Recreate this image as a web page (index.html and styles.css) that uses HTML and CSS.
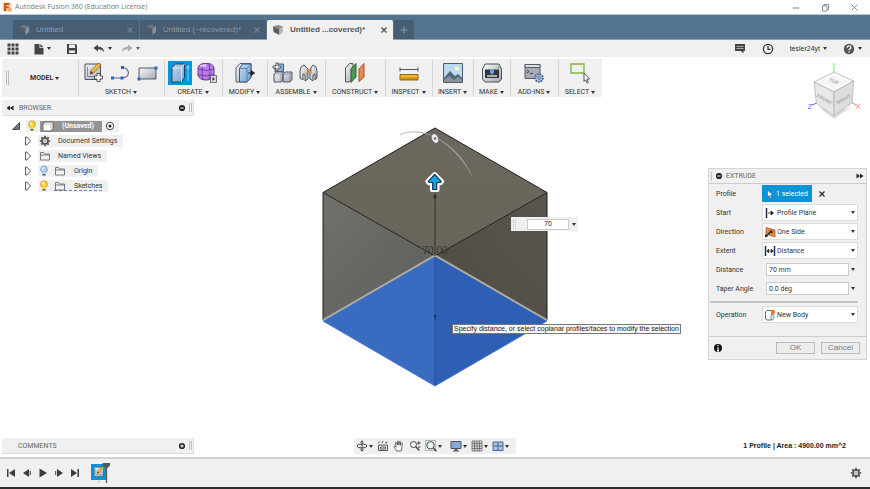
FILE: index.html
```html
<!DOCTYPE html>
<html lang="en">
<head>
<meta charset="utf-8">
<meta name="viewport" content="width=device-width, initial-scale=1">
<title>Autodesk Fusion 360 (Education License)</title>
<link rel="stylesheet" href="styles.css">
</head>
<body>
<svg class="defs" aria-hidden="true">
  <defs>
    <linearGradient id="steel" x1="0" y1="0" x2="1" y2="1"><stop offset="0" stop-color="#f7f8fa"/><stop offset="1" stop-color="#a3a9b6"/></linearGradient>
    <linearGradient id="blue" x1="0" y1="0" x2="1" y2="1"><stop offset="0" stop-color="#c5dcf3"/><stop offset="1" stop-color="#6f9fd0"/></linearGradient>
    <linearGradient id="faceTop" x1="0" y1="0" x2="0" y2="1"><stop offset="0" stop-color="#6c685e"/><stop offset="1" stop-color="#69655b"/></linearGradient>
    <linearGradient id="faceLeft" x1="0" y1="0" x2="1" y2="1"><stop offset="0" stop-color="#70716d"/><stop offset="1" stop-color="#5d5e59"/></linearGradient>
    <linearGradient id="faceRight" x1="1" y1="0" x2="0" y2="1"><stop offset="0" stop-color="#5a554d"/><stop offset="1" stop-color="#4f4b44"/></linearGradient>
    <linearGradient id="arcFade" x1="0" y1="0" x2="1" y2="1"><stop offset="0" stop-color="#aaa" stop-opacity=".5"/><stop offset=".35" stop-color="#8f8f8f"/><stop offset=".7" stop-color="#aaa"/><stop offset="1" stop-color="#aaa" stop-opacity=".1"/></linearGradient>
    <symbol id="tabcube" viewBox="0 0 12 12"><path d="M1 2.500 6 1l5 1.500L7.500 5z" fill="#8b8b8b"/><path d="M1 2.500 7.500 5v6L1.500 8z" fill="#5c5c5c"/><path d="M7.500 5 11 2.500V8l-3.500 3z" fill="#b8b8b8"/></symbol>
    <symbol id="bulb" viewBox="0 0 10 12"><circle cx="5" cy="4.300" r="3.400" stroke-width=".7"/><path d="M3.300 7h3.400v2H3.300z" stroke="none"/><path d="M3.400 9h3.200v1.600H3.400z" fill="#666" stroke="none"/><circle cx="4" cy="3.300" r="1.100" fill="#fff" fill-opacity=".8" stroke="none"/></symbol>
    <symbol id="folder" viewBox="0 0 12 10"><path d="M1.500 9V1.500h3l1 1.500h5v6zM1.500 4h9" fill="#f4f4f4" stroke="#555a66" stroke-width=".8"/></symbol>
    <symbol id="gear" viewBox="0 0 12 12"><path d="M6 .8v10.400M.8 6h10.400M2.300 2.300l7.400 7.400m0-7.400L2.300 9.700" stroke="#505050" stroke-width="1.700"/><circle cx="6" cy="6" r="3" fill="#f0f0f0" stroke="#505050" stroke-width="1.500"/><circle cx="6" cy="6" r="1.200" fill="#f0f0f0" stroke="#777" stroke-width=".6"/></symbol>
    <symbol id="expand" viewBox="0 0 8 10"><path d="M1.500 1v8h1.300L6.500 5 2.800 1z" fill="#f7f7f7" stroke="#333" stroke-width=".8"/></symbol>
    <symbol id="sketch" viewBox="0 0 20 20"><path d="M2 2h15.500v15.500H2z" fill="url(#steel)" stroke="#4c5160"/><path d="M4.500 4.500v10h10" fill="none" stroke="#6d7484" stroke-width=".8"/><path d="m7 12 1-3.500L15.500 1l2.500 2.300-7.700 7.900z" fill="#f4bd37" stroke="#7a5a1d" stroke-width=".7"/><path d="m7 12 1-3 2.100 2.100z" fill="#333"/></symbol>
    <symbol id="cross" viewBox="0 0 8 8"><path d="m1.500 1.500 5 5m0-5-5 5" stroke="currentColor" stroke-width="1.400"/></symbol>
    <symbol id="plusdot" viewBox="0 0 8 8"><circle cx="4" cy="4" r="3.100" fill="#222"/><path d="M2.300 4h3.400M4 2.300v3.400" stroke="#fff"/></symbol>
    <symbol id="minusdot" viewBox="0 0 8 8"><circle cx="4" cy="4" r="3.100" fill="#222"/><path d="M2.300 4h3.400" stroke="#fff"/></symbol>
  </defs>
</svg>

<header class="titlebar">
  <svg class="logo" width="10" height="10" viewBox="0 0 10 10"><path d="M.5.500h9v9h-9z" fill="#f7d3b2"/><path d="M2 1h5.500v2H4.300v1.500H7v1.800H4.300V9H2z" fill="#c85a11"/><path d="M7 6h2.500v3.500H6z" fill="#f0a35f"/></svg>
  <h1>Autodesk Fusion 360 (Education License)</h1>
  <div class="caption">
    <button aria-label="Minimize"><svg width="9" height="9" viewBox="0 0 9 9"><path d="M1 5h6.500" stroke="#777"/></svg></button>
    <button aria-label="Restore"><svg width="9" height="9" viewBox="0 0 9 9"><path d="M1.500 3h4.500v5H1.500zM3 3V1.500h4.500v5H6" fill="none" stroke="#777" stroke-width=".8"/></svg></button>
    <button aria-label="Close"><svg width="9" height="9" viewBox="0 0 9 9"><path d="m1.500 1.500 6 6m0-6-6 6" stroke="#777" stroke-width=".8"/></svg></button>
  </div>
</header>

<nav class="tabs" aria-label="Documents">
  <div class="tab"><svg width="12" height="12"><use href="#tabcube"/></svg><a href="#d1">Untitled</a><button aria-label="Close tab"><svg width="8" height="8"><use href="#cross"/></svg></button></div>
  <div class="tab"><svg width="12" height="12"><use href="#tabcube"/></svg><a href="#d2">Untitled (~recovered)*</a><button aria-label="Close tab"><svg width="8" height="8"><use href="#cross"/></svg></button></div>
  <div class="tab active"><svg width="12" height="12"><use href="#tabcube"/></svg><a href="#d3">Untitled ...covered)*</a><button aria-label="Close tab"><svg width="8" height="8"><use href="#cross"/></svg></button></div>
  <button class="newtab" aria-label="New tab"><svg width="8" height="8" viewBox="0 0 8 8"><path d="M4 .5v7M.5 4h7" stroke="#8396a8" stroke-width="1.200"/></svg></button>
</nav>

<div class="quick">
  <div class="quick-left">
    <button aria-label="Data panel"><svg width="12" height="12" viewBox="0 0 12 12" fill="#444"><path d="M.5.500h3v3h-3zM4.500.500h3v3h-3zM8.500.500h3v3h-3zM.5 4.500h3v3h-3zM4.500 4.500h3v3h-3zM8.500 4.500h3v3h-3zM.5 8.500h3v3h-3zM4.500 8.500h3v3h-3zM8.500 8.500h3v3h-3z"/></svg></button>
    <button aria-label="File" class="drop"><svg width="10" height="12" viewBox="0 0 10 12"><path d="M.5 1h5v4h4v6.500h-9z" fill="#444"/><path d="M6.300 1 9.500 4.200H6.300z" fill="#444"/></svg><i class="caret"></i></button>
    <button aria-label="Save"><svg width="12" height="12" viewBox="0 0 12 12"><path d="M1 1h8.800L11 2.200V11H1z" fill="#444"/><path d="M3 1.500h6V5H3zM3 7.500h6V10H3z" fill="#efefef"/></svg></button>
    <div class="history">
      <button aria-label="Undo" class="drop"><svg width="12" height="10" viewBox="0 0 12 10"><path d="M.5 4 5 .5v2.200c3.500 0 6 1.800 6 5.300-1.500-2-3-2.700-6-2.700v2.200z" fill="#444"/></svg><i class="caret"></i></button>
      <button aria-label="Redo" class="drop dim"><svg width="12" height="10" viewBox="0 0 12 10"><path d="M11.500 4 7 .5v2.200c-3.500 0-6 1.800-6 5.300 1.500-2 3-2.700 6-2.700v2.200z" fill="#999"/></svg><i class="caret"></i></button>
    </div>
  </div>
  <div class="quick-right">
    <button aria-label="Feedback"><svg width="12" height="11" viewBox="0 0 12 11"><path d="M1 1h10v7H9.500v2.500L7 8H1z" fill="#444"/><path d="M2.500 3.500h7m-7 2h7" stroke="#aaa"/></svg></button>
    <button aria-label="Job status"><svg width="12" height="12" viewBox="0 0 12 12" fill="none" stroke="#333"><circle cx="6" cy="6" r="4.600" stroke-width="1.300"/><path d="M6 3v3.300h2.500" stroke-width="1.200"/></svg></button>
    <button class="drop user">tesler24yt<i class="caret"></i></button>
    <button aria-label="Help" class="drop"><svg width="12" height="12" viewBox="0 0 12 12"><circle cx="6" cy="6" r="5.200" fill="#555"/><path d="M4.200 4.700c0-2.500 3.700-2.300 3.700-.2C7.900 5.800 6 5.800 6 7.300M6 8.200v1.300" fill="none" stroke="#fff" stroke-width="1.200"/></svg><i class="caret"></i></button>
  </div>
</div>

<main class="stage">
  <div class="scene">
    <svg class="model" width="224" height="258" viewBox="323 128 224 258" role="img" aria-label="Extruded box">
      <path d="M435 128 547 192.500 435 256 323 192.500z" fill="url(#faceTop)"/>
      <path d="M323 192.500 435 256 323 321z" fill="url(#faceLeft)"/>
      <path d="M547 192.500 435 256 547 321z" fill="url(#faceRight)"/>
      <path d="M435 256 323 321l112 65z" fill="#396bc0"/><path d="M435 256l112 65-112 65z" fill="#2f5fb5"/>
      <path d="M323 320V192.500L435 128l112 64.500V320M323 192.500 435 256l112-63.500" fill="none" stroke="#201f1c"/>
      <path d="M323 320 435 255.500 547 320" fill="none" stroke="#aca9a2" stroke-width="2"/>
      <path d="M435 194v62" stroke="#3f3c37" stroke-width="1.300"/><path d="M433.500 198 435 193l1.500 5zM433.500 315h3L435 320z" fill="#282622"/><path d="M435 257v129" stroke="#234c95"/>
      <text x="435" y="254" text-anchor="middle" class="dimension">70.00</text>
      <path d="M323 321 435 386l112-65" fill="none" stroke="#4b79cc"/>
      <path d="M400 135c8-5 22-4 35 2 17 9 29 22 38 41" fill="none" stroke="url(#arcFade)" stroke-width="1.300"/>
      <ellipse cx="435" cy="138.500" rx="3.500" ry="5" transform="rotate(-25 435 138.500)" fill="#eee" stroke="#666"/><circle cx="435" cy="138.500" r="1.200" fill="#999" stroke="#555" stroke-width=".5"/>
      <path d="m434.700 174 7.500 7.500-1.500 1.800h-3.200v6.700h-5.600v-6.700h-3.200l-1.500-1.800z" fill="#0da4e8" stroke="#fff" stroke-width="4" stroke-linejoin="round"/>
      <path d="m434.700 174.500 6.500 6.800-1 1.200h-3.500v7h-4v-7h-3.500l-1-1.200z" fill="#0da4e8" stroke="#12384c" stroke-width="1.200" stroke-linejoin="round"/>
    </svg>
    <div class="mini"><i class="grip dots"></i><input aria-label="Extrude distance" value="70"><i class="caret"></i></div>
    <div class="tooltip" role="tooltip">Specify distance, or select coplanar profiles/faces to modify the selection</div>
  </div>

  <div class="upper">
    <div class="left">
      <div class="ribbon">
        <div class="workspace"><i class="grip"></i><button class="label strong">MODEL<i class="caret"></i></button></div>
        <div class="group"><div class="icons wide">
          <svg width="22" height="22" viewBox="0 0 22 22"><use href="#sketch" width="20" height="20"/><path d="M14 14v-2.500h3V14h2.500v3H17v2.500h-3V17h-2.500v-3z" fill="#fff" stroke="#333" stroke-width=".8"/></svg>
          <svg width="22" height="22" viewBox="0 0 22 22"><path d="M2.500 16h9c10 0 8-10.500 1-10.500" fill="none" stroke="#667" stroke-width="1.200"/><path d="M1 14.500h3v3H1zM10.500 14.500h3v3h-3zM11 4h3v3h-3z" fill="#2866c9"/></svg>
          <svg width="22" height="22" viewBox="0 0 22 22"><path d="M2 6h17v11H2z" fill="url(#steel)" stroke="#555b69"/><path d="M.5 15.500h3v3h-3zM17.500 4.500h3v3h-3z" fill="#2866c9"/></svg>
        </div><button class="label">SKETCH<i class="caret"></i></button></div>
        <div class="group"><div class="icons">
          <span class="selected"><svg width="22" height="22" viewBox="0 0 22 22"><path d="m3 6 3-4h9.500v13.500L12.500 20H3z" fill="url(#blue)" stroke="#28435e"/><path d="M3 6h9.500l3-4M12.500 6v14" fill="none" stroke="#edf6ff" stroke-width=".7"/><path d="M19 19V4M17.500 6.500 19 3.500l1.500 3" fill="none" stroke="#8ce0ff" stroke-width=".9"/></svg></span>
          <svg width="22" height="22" viewBox="0 0 22 22"><path d="M2 6q1-5 8-4.500 7-.5 8 4.500v7q-1 5-8 5t-8-5z" fill="#b77bea" stroke="#6e3a9b"/><path d="M2 7q8 3 16 0M2 12.500q8 3 16 0M7 2q-2 8 0 16m6-16q2 8 0 16" fill="none" stroke="#6e3a9b" stroke-width=".9"/><path d="M4 3.500q3-2 6-1.500v3q-3 0-6-.5z" fill="#e9cfff" fill-opacity=".8"/><path d="M14.500 13.500h6v7h-6z" fill="#ddd" stroke="#555" stroke-width=".8"/><path d="m16.500 15 2.500 2-2.500 2z" fill="#333"/></svg>
        </div><button class="label">CREATE<i class="caret"></i></button></div>
        <div class="group"><div class="icons">
          <svg width="22" height="22" viewBox="0 0 22 22"><path d="m2 6 4-4.500h11v14L13 20H2z" fill="url(#steel)" stroke="#586274"/><path d="m5.500 6.500 3-4.500H17v13.500L13 20H5.500z" fill="url(#blue)" stroke="#385b7c"/><path d="M5.500 6.500H13L17 2M13 6.500V20" fill="none" stroke="#46688c" stroke-width=".7"/><path d="M14 11h4m-1-2.500 3.500 2.500-3.500 2.500z" fill="#222" stroke="#222"/></svg>
        </div><button class="label">MODIFY<i class="caret"></i></button></div>
        <div class="group"><div class="icons">
          <svg width="22" height="22" viewBox="0 0 22 22"><path d="m3 4 2-2h6.500v8H3z" fill="url(#blue)" stroke="#3c5e82"/><path d="m2 12 2-2h7v8l-2 2H2zM11 12l2-2h7v8l-2 2h-7z" fill="url(#steel)" stroke="#525865"/><path d="M2 12h7v8m0-8 2-2m0 2h7v8m0-8 2-2" fill="none" stroke="#6d7382" stroke-width=".6"/><path d="M4 1h2v3h3v2H6v3H4V6H1V4h3z" fill="#fff" stroke="#333" stroke-width=".8"/></svg>
          <svg width="22" height="22" viewBox="0 0 22 22"><path d="M2 9q0-5 4-6l4 4v10l-3 2v-6l-2-1v6l-3-2z" fill="url(#steel)" stroke="#50545d"/><path d="M19 9q0-5-4-6l-3 4v10l3 2v-6l2-1v6l2-2z" fill="url(#steel)" stroke="#50545d"/><path d="m8 12 5-5v5" fill="none" stroke="#e08020" stroke-width="1.200"/></svg>
        </div><button class="label">ASSEMBLE<i class="caret"></i></button></div>
        <div class="group"><div class="icons">
          <svg width="22" height="22" viewBox="0 0 22 22"><path d="m1.500 6 4-4.500H9v14L5 20H1.500z" fill="url(#steel)" stroke="#555"/><path d="m7 7 5-5.500V15L7 20.500z" fill="#4e9c53" stroke="#2e5d34"/><path d="m15 7 5-5.500V15l-5 4.500z" fill="#e98a54" stroke="#a4512a"/></svg>
        </div><button class="label">CONSTRUCT<i class="caret"></i></button></div>
        <div class="group"><div class="icons">
          <svg width="22" height="22" viewBox="0 0 22 22"><path d="M2 7.500h18M2 5.500v4m18-4v4" stroke="#555"/><path d="M2 12.500h18V18H2z" fill="#f4b622" stroke="#8c6618"/><path d="M4 15.500V18m2-2.500V18m2-2.500V18m2-2.500V18m2-2.500V18m2-2.500V18m2-2.500V18m2-2.500V18" stroke="#6f5319" stroke-width=".7"/></svg>
        </div><button class="label">INSPECT<i class="caret"></i></button></div>
        <div class="group"><div class="icons">
          <svg width="22" height="22" viewBox="0 0 22 22"><path d="M1.500 1.500h19v19h-19z" fill="#b8dbef" stroke="#555b65"/><circle cx="15" cy="6.500" r="2.300" fill="#fff6b9"/><path d="m2 16 6-7 5 5 3-2 4 4v4H2z" fill="#56677b"/><path d="m2 18 5-4 5 4 4-3 4 3v2H2z" fill="#8694a2"/></svg>
        </div><button class="label">INSERT<i class="caret"></i></button></div>
        <div class="group"><div class="icons">
          <svg width="22" height="22" viewBox="0 0 22 22"><path d="M1.500 7 4 2h14l2.500 5v10L18 20H4l-2.500-3z" fill="url(#steel)" stroke="#4b4e55"/><path d="M4 7.500h14V16H4z" fill="#31353d"/><path d="M9 7.500h4v3L11 13l-2-2.500z" fill="#6aa1dd"/><path d="M6 14h10" stroke="#ddd" stroke-width="1.500"/><circle cx="17.500" cy="5.500" r=".9" fill="#35b344"/></svg>
        </div><button class="label">MAKE<i class="caret"></i></button></div>
        <div class="group"><div class="icons">
          <svg width="22" height="22" viewBox="0 0 22 22"><path d="M2 2.500h15v14H2z" fill="#a5acb8" stroke="#555b68"/><path d="M2 2.500h15v3H2z" fill="#dadde3" stroke="#555b68"/><path d="m4 8 2 1.500L4 11m3 .5h3" fill="none" stroke="#333" stroke-width=".9"/><circle cx="16" cy="16" r="3.800" fill="#b9cce4" stroke="#3d6391" stroke-width="2" stroke-dasharray="1.600 1"/><circle cx="16" cy="16" r="1.300" fill="#fff" stroke="#3d6391"/></svg>
        </div><button class="label">ADD-INS<i class="caret"></i></button></div>
        <div class="group"><div class="icons">
          <svg width="22" height="22" viewBox="0 0 22 22"><path d="M2 2h13v9H2z" fill="none" stroke="#7cb73d" stroke-width="1.300"/><path d="m15 11 5.500 6-2.500.2 1.300 3-1.500.6-1.300-3-1.500 1.600z" fill="#fff" stroke="#444" stroke-width=".9"/></svg>
        </div><button class="label">SELECT<i class="caret"></i></button></div>
      </div>

      <section class="browser">
        <header class="panelbar"><svg width="8" height="6" viewBox="0 0 8 6"><path d="M4 .5v5L.5 3zM7.500.500v5L4 3z" fill="#222"/></svg><h2>BROWSER</h2><svg width="8" height="8"><use href="#minusdot"/></svg><i class="grip"></i></header>
        <ul class="tree">
          <li><button class="twist" aria-label="Collapse"><svg width="8" height="8" viewBox="0 0 8 8"><path d="M7.500.500v7h-7z" fill="#777" stroke="#333" stroke-width=".8"/></svg></button>
            <div class="node"><svg class="on" width="10" height="12"><use href="#bulb"/></svg><span class="root"><svg width="12" height="11" viewBox="0 0 12 11"><path d="m1 3 2-2h8v7l-2 2H1z" fill="#fff" stroke="#555" stroke-width=".8"/><path d="M1 3h8v7m0-7 2-2" fill="none" stroke="#999" stroke-width=".6"/></svg>(Unsaved)</span><svg width="10" height="10" viewBox="0 0 10 10"><circle cx="5" cy="5" r="3.700" fill="#fff" stroke="#333" stroke-width=".9"/><circle cx="5" cy="5" r="1.500" fill="#222"/></svg></div>
            <ul>
              <li><button class="twist" aria-label="Expand"><svg width="8" height="10"><use href="#expand"/></svg></button><div class="node"><svg width="12" height="12"><use href="#gear"/></svg><span>Document Settings</span></div></li>
              <li><button class="twist" aria-label="Expand"><svg width="8" height="10"><use href="#expand"/></svg></button><div class="node"><svg width="12" height="10"><use href="#folder"/></svg><span>Named Views</span></div></li>
              <li><button class="twist" aria-label="Expand"><svg width="8" height="10"><use href="#expand"/></svg></button><div class="node lit"><svg class="off" width="10" height="12"><use href="#bulb"/></svg><svg width="12" height="10"><use href="#folder"/></svg><span>Origin</span></div></li>
              <li><button class="twist" aria-label="Expand"><svg width="8" height="10"><use href="#expand"/></svg></button><div class="node lit"><svg class="on" width="10" height="12"><use href="#bulb"/></svg><div class="flagged"><svg width="12" height="10"><use href="#folder"/></svg><span>Sketches</span></div></div></li>
            </ul>
          </li>
        </ul>
      </section>
    </div>

    <aside class="right">
      <svg class="viewcube" width="56" height="62" viewBox="806 60 56 62" role="img" aria-label="View cube">
        <path d="m818 107 16 12 17-12-17 5z" fill="#bbb" opacity=".5"/>
        <path d="M834 72v-5" stroke="#6f6"/><path d="m817 103-5 2" stroke="#66e"/><path d="m851 102 5 3" stroke="#f77"/>
        <path d="M834 72 853.700 81 834 92l-19.700-10z" fill="#f5f5f5" stroke="#aaa" stroke-width=".7"/>
        <path d="M814.300 82 834 92v23.700l-17.700-12.400z" fill="#e8e8e8" stroke="#aaa" stroke-width=".7"/>
        <path d="M853.700 81 834 92v23.700l18-13z" fill="#dedede" stroke="#aaa" stroke-width=".7"/>
        <path d="m818 82 16-8 16 7.500-16 8.500z" fill="none" stroke="#fff"/>
        <text x="834" y="83" transform="rotate(22 834 81)">TOP</text><text x="824.500" y="101" transform="rotate(30 824.500 99)">FRONT</text><text x="843.500" y="101" transform="rotate(-30 843.500 99)">RIGHT</text>
        <text x="834" y="68" class="axis y">Y</text><text x="810" y="109" class="axis z">Z</text><text x="858" y="109" class="axis x">X</text>
      </svg>

      <form class="dialog">
        <header><i class="grip"></i><svg width="8" height="8"><use href="#minusdot"/></svg><h2>EXTRUDE</h2><svg width="8" height="6" viewBox="0 0 8 6"><path d="M.5.500 4 3 .5 5.500zM4 .5 7.500 3 4 5.500z" fill="#222"/></svg></header>
        <div class="fields">
          <div class="row"><span>Profile</span><div class="pick"><button type="button" class="chosen"><svg width="8" height="10" viewBox="0 0 8 10"><path d="M1.500 1v7l1.700-1.500L4.500 9.500l1.200-.6-1.200-2.700h2.300z" fill="#fff" stroke="#345" stroke-width=".5"/></svg>1 selected</button><button type="button" aria-label="Clear selection"><svg width="8" height="8"><use href="#cross"/></svg></button></div></div>
          <div class="row"><label for="start">Start</label><div class="combo"><svg width="12" height="12" viewBox="0 0 12 12"><path d="M2.500 1v10" stroke="#1c2c4c" stroke-width="1.500"/><path d="M4 6h4M7 4l2.500 2L7 8z" fill="#222" stroke="#222" stroke-width=".8"/></svg><select id="start"><option>Profile Plane</option></select><i class="caret"></i></div></div>
          <div class="row"><label for="dir">Direction</label><div class="combo"><svg width="12" height="12" viewBox="0 0 12 12"><path d="m2 1.500 9 2.500v7L2 8z" fill="#ec8b43" stroke="#a9521a" stroke-width=".8"/><path d="m1.500 10.500 5-4.500" stroke="#222" stroke-width="1.500"/><path d="m1 8 3 3H1zM5 4.500h3.500V8z" fill="#222"/></svg><select id="dir"><option>One Side</option></select><i class="caret"></i></div></div>
          <div class="row"><label for="extent">Extent</label><div class="combo"><svg width="12" height="12" viewBox="0 0 12 12"><path d="M1.500 1v10m9-10v10" stroke="#1c2c5c" stroke-width="1.500"/><path d="M3 6h6M4.800 4 2.800 6l2 2zM7.200 4l2 2-2 2z" fill="#222" stroke="#222" stroke-width=".6"/></svg><select id="extent"><option>Distance</option></select><i class="caret"></i></div></div>
          <div class="row"><label for="dist">Distance</label><div class="value"><input id="dist" value="70 mm"><i class="caret"></i></div></div>
          <div class="row"><label for="taper">Taper Angle</label><div class="value"><input id="taper" value="0.0 deg"><i class="caret"></i></div></div>
        </div>
        <hr>
        <div class="fields last">
          <div class="row"><label for="op">Operation</label><div class="combo"><svg width="12" height="12" viewBox="0 0 12 12"><path d="M1.500 3 3 1.500h5v8.500l-1 1H3l-1.500-1z" fill="#fff" stroke="#666"/><path d="M7 5.500h3V9L8.500 11H7z" fill="#ddd" stroke="#777" stroke-width=".7"/><circle cx="9" cy="3" r="2.200" fill="#ef7c32"/></svg><select id="op"><option>New Body</option></select><i class="caret"></i></div></div>
        </div>
        <footer><svg width="10" height="10" viewBox="0 0 10 10"><circle cx="5" cy="5" r="4" fill="#111"/><path d="M5 2v1.300M5 4.300V8M4 7.800h2" stroke="#fff" stroke-width="1.200"/></svg><button type="button">OK</button><button type="button">Cancel</button></footer>
      </form>
    </aside>
  </div>

  <div class="lower">
    <header class="panelbar"><h2 class="indent">COMMENTS</h2><svg width="8" height="8"><use href="#plusdot"/></svg><i class="grip"></i></header>
    <div class="navbar">
      <button class="drop" aria-label="Orbit"><svg width="12" height="12" viewBox="0 0 12 12" fill="none" stroke="#444"><ellipse cx="6" cy="6" rx="5" ry="2"/><path d="M6 1v10M4.500 2.500 6 .8l1.500 1.700M4.500 9.500 6 11.200l1.500-1.700"/></svg><i class="caret"></i></button>
      <button aria-label="Look at"><svg width="12" height="12" viewBox="0 0 12 12" fill="none" stroke="#555"><path d="M1.500 5h9v5.500h-9zM3.500 7h5v2h-5z"/><path d="m1 3.500 2-2m2 1.500 1-2m2 2 2.500-1"/></svg></button>
      <button aria-label="Pan"><svg width="12" height="12" viewBox="0 0 12 12"><path d="M3.500 11C3 9 1 7.500 1 6.300c.5-.8 1.500 0 2.200 1L2.500 3c.3-1 1.200-.5 1.300 0L4.500 5V1.500c.3-.8 1.200-.7 1.300 0V5l.7-3.300c.4-.7 1.200-.5 1.200.3L7.300 5.500l1.200-2c.5-.6 1.300-.2 1 .6C8.900 6 9.300 8 8 11z" fill="#fff" stroke="#444" stroke-width=".8"/></svg></button>
      <button aria-label="Zoom"><svg width="12" height="12" viewBox="0 0 12 12" fill="none" stroke="#444"><circle cx="4.500" cy="4.500" r="3" fill="#eaf5fa"/><path d="m6.800 6.800 3.500 3.700" stroke-width="1.600"/><path d="M8 3h3.500M9.800 1.300v3.500M9 7h2.500"/></svg></button>
      <button class="drop" aria-label="Zoom window"><svg width="12" height="12" viewBox="0 0 12 12" fill="none" stroke="#444"><path d="M.5.500h10v10H.5z" stroke-dasharray="1 1" stroke-width=".7"/><circle cx="5.500" cy="5.300" r="3.700" fill="#e7f6fa"/><path d="m8.500 8.300 3 3" stroke-width="1.600"/></svg><i class="caret"></i></button>
      <button class="drop split" aria-label="Display settings"><svg width="12" height="12" viewBox="0 0 12 12"><path d="M1 1.500h10v7H1z" fill="#86abd9" stroke="#4a5260"/><path d="M4.500 9h3v2h-3z" fill="#667"/><path d="M3 11h6" stroke="#555"/></svg><i class="caret"></i></button>
      <button class="drop" aria-label="Grid and snaps"><svg width="12" height="12" viewBox="0 0 12 12"><path d="M1 1h10v10H1zM3.500 1v10M6 1v10m2.500-10v10M1 3.500h10M1 6h10M1 8.500h10" fill="#ddd" stroke="#666" stroke-width=".8"/></svg><i class="caret"></i></button>
      <button class="drop" aria-label="Viewports"><svg width="12" height="12" viewBox="0 0 12 12"><path d="M1 2h10v8.500H1zM6 2v8.500M1 6h10" fill="#a8c5e8" stroke="#48678e"/></svg><i class="caret"></i></button>
    </div>
    <p class="status">1 Profile | Area : 4900.00 mm^2</p>
  </div>
</main>

<footer class="timeline">
  <div class="play">
    <button aria-label="Go to start"><svg width="10" height="10" viewBox="0 0 10 10" fill="#3c3c3c"><path d="M1 1h1.500v8H1zM9 1v8L3 5z"/></svg></button>
    <button aria-label="Step back"><svg width="10" height="10" viewBox="0 0 10 10" fill="#3c3c3c"><path d="M7 1v8L1 5z"/><path d="M7.800 3h1v4h-1z"/></svg></button>
    <button aria-label="Play"><svg width="10" height="10" viewBox="0 0 10 10" fill="#3c3c3c"><path d="M1.500.500v9L9 5z"/></svg></button>
    <button aria-label="Step forward"><svg width="10" height="10" viewBox="0 0 10 10" fill="#3c3c3c"><path d="M3 1v8l6-4z"/><path d="M1.200 3h1v4h-1z"/></svg></button>
    <button aria-label="Go to end"><svg width="10" height="10" viewBox="0 0 10 10" fill="#3c3c3c"><path d="M7.500 1H9v8H7.500zM1 1v8l6-4z"/></svg></button>
  </div>
  <button class="feature" aria-label="Sketch feature"><svg width="20" height="22" viewBox="0 0 20 22"><path d="M0 2h16v16H0z" fill="#0696d7"/><use href="#sketch" x="2" y="4" width="12" height="12"/><path d="M8 18v3" stroke="#bbb"/><path d="M11.500 1H19v2.500L16.500 6h-2l-3-2.500z" fill="#555"/><path d="M15.500 5v16" stroke="#555" stroke-width="1.200"/></svg></button>
  <button aria-label="Settings" class="settings"><svg width="12" height="12"><use href="#gear"/></svg></button>
</footer>
</body>
</html>
```
FILE: styles.css
```css
* { box-sizing: border-box; }

body {
  margin: 0;
  height: 100vh;
  display: flex;
  flex-direction: column;
  background: #fff;
  color: #333;
  font: 7px/10px Roboto, "Liberation Sans", sans-serif;
  overflow: hidden;
}

svg { display: block; flex: none; }
h1, h2, p, ul { margin: 0; padding: 0; font-size: inherit; font-weight: normal; }
ul { list-style: none; }
a { color: inherit; text-decoration: none; }

button {
  display: flex;
  align-items: center;
  justify-content: center;
  padding: 0;
  border: 0;
  background: none;
  color: inherit;
  font: inherit;
}

input, select {
  font: inherit;
  color: inherit;
  background: #fff;
  border: 1px solid #ccc;
  border-radius: 0;
  min-width: 0;
  padding: 0;
}

.defs { position: absolute; width: 0; height: 0; }

.caret {
  flex: none;
  border: 2px solid transparent;
  border-top: 3px solid #333;
  border-bottom: 0;
}

.drop { gap: 3px; }
.dim { opacity: .75; }

.grip {
  flex: none;
  width: 3px;
  height: 9px;
  border: solid #bbb;
  border-width: 0 1px;
}

/* Title bar */
.titlebar {
  display: flex;
  align-items: center;
  height: 15px;
  padding: 0 11px 0 2px;
  gap: 3px;
  border-bottom: 1px solid #b9cbd9;
}
.titlebar h1 { flex: 1; color: #777; font: 7px/10px "Open Sans", "Noto Sans", sans-serif; }
.caption { display: flex; gap: 20px; }

/* Document tabs */
.tabs {
  display: flex;
  height: 25px;
  padding: 5px 13px 0;
  gap: 1px;
  background: #54738f;
  border-bottom: 1px solid #8ba1b5;
}
.tab {
  display: flex;
  align-items: center;
  width: 126px;
  padding: 0 5px;
  gap: 6px;
  background: #465d74;
  color: #8b9aaa;
  border-radius: 2px 2px 0 0;
  font: 8px/10px "Liberation Sans", sans-serif;
}
.tab a { flex: 1; white-space: nowrap; }
.tab svg { opacity: .6; }
.tab.active { height: 20px; background: #f0f0f0; color: #555; font-weight: bold; }
.tab.active svg { opacity: 1; }
.newtab { width: 20px; background: #465d74; border-radius: 2px 2px 0 0; }

/* Quick access bar */
.quick {
  display: flex;
  justify-content: space-between;
  height: 17px;
  padding: 0 8px 0 7px;
  background: #f0f0f0;
}
.quick-left, .quick-right { display: flex; align-items: center; }
.quick-left { gap: 15px; }
.history { display: flex; gap: 9px; }
.quick-right { gap: 16px; }
.user { font-family: "Liberation Sans", sans-serif; }

/* Stage */
.stage {
  position: relative;
  flex: 1;
  display: flex;
  flex-direction: column;
  padding: 2px 3px 3px 2px;
}
.upper { display: flex; flex: 1; }
.left { flex: 1; }
.right { display: flex; flex-direction: column; width: 159px; }

/* Model canvas */
.scene { position: absolute; top: 71px; left: calc(50% - 112px); }
.model { overflow: visible; }
.dimension { font: 10px "Liberation Sans", sans-serif; fill: #35322d; }
.mini {
  position: absolute;
  top: 89px;
  left: 188px;
  display: flex;
  align-items: center;
  gap: 3px;
  height: 14px;
  padding: 0 2px;
  background: #efefef;
}
.mini input { width: 42px; height: 11px; margin-left: 8px; text-align: center; }
.dots { border-style: dotted; }
.tooltip {
  position: absolute;
  top: 196px;
  left: 129px;
  padding: 0 1px;
  border: 1px solid #777;
  background: #f6f6f6;
  color: #222;
  font: 7px/8px "Liberation Sans", sans-serif;
  white-space: nowrap;
}

/* Ribbon */
.ribbon {
  display: grid;
  grid-template-columns: 76px 86px 58px 45px 58px 60px 47px 41px 37px 48px 44px;
  width: max-content;
  height: 38px;
  background: #f0f0f0;
}
.workspace { display: flex; align-items: center; gap: 21px; padding-left: 4px; }
.workspace .grip { height: 14px; }
.group {
  display: flex;
  flex-direction: column;
  align-items: center;
  justify-content: space-between;
  padding-top: 1px;
  box-shadow: inset 1px 0 #d6d6d6;
}
.icons { display: flex; align-items: center; gap: 4px; height: 25px; }
.wide { gap: 5px; }
.selected { display: grid; place-items: center; width: 24px; height: 24px; background: #0696d7; }
.label { gap: 2px; line-height: 9px; white-space: nowrap; }
.strong { font-weight: bold; }

/* Browser */
.panelbar {
  display: flex;
  align-items: center;
  width: 192px;
  height: 16px;
  padding: 0 1px 0 4px;
  gap: 3px;
  background: #f0f0f0;
  border: 1px solid #ddd;
  border-width: 0 1px 1px 0;
}
.panelbar h2 { flex: 1; margin-left: 2px; color: #666; }
.panelbar .indent { margin-left: 12px; }
.browser { margin-top: 3px; }
.tree { margin-top: 4px; }
.tree li { display: flex; flex-wrap: wrap; align-items: center; gap: 3px 6px; padding-left: 10px; }
.tree ul { width: 100%; display: grid; gap: 3px; padding-left: 2px; }
.twist { width: 8px; height: 12px; }
.node {
  display: flex;
  align-items: center;
  gap: 7px;
  height: 12px;
  padding: 0 6px 0 1px;
  background: #f0f0f0;
}
.tree > li > .node { gap: 3px; padding: 0 4px 0 1px; }
.lit { gap: 5px; }
.flagged { display: flex; align-items: center; gap: 8px; height: 10px; border-bottom: 1px dashed #6d87b5; }
.lit > span { margin-left: 3px; }
.root {
  display: flex;
  align-items: center;
  gap: 8px;
  height: 11px;
  padding: 0 8px 0 2px;
  background: #949494;
  color: #fff;
  font-weight: bold;
}
.on { fill: #ffd83a; stroke: #a88a20; }
.off { fill: #b5cdf5; stroke: #7389b0; }

/* View cube */
.viewcube { margin: 1px 5px 46px auto; }
.viewcube text { font: bold 5px "Liberation Sans", sans-serif; text-anchor: middle; fill: #aaa; }
.viewcube .axis { font: 8px "Liberation Sans", sans-serif; }
.viewcube .x { fill: #ff7474; }
.viewcube .y { fill: #7dfb7d; }
.viewcube .z { fill: #6c6cf2; }

/* Extrude dialog */
.dialog { background: #f0f0f0; border: 1px solid #d5d5d5; }
.dialog header {
  display: flex;
  align-items: center;
  height: 15px;
  padding: 0 2px 0 0;
  gap: 3px;
  border-bottom: 1px solid #ccc;
  color: #666;
}
.dialog h2 { flex: 1; }
.dialog .grip { border-left: 0; }
.fields { display: grid; grid-template-columns: minmax(0, 1fr); gap: 2px; padding: 1px 8px 4px 7px; }
.row { display: grid; grid-template-columns: 46px minmax(0, 1fr); align-items: center; height: 17px; }
.pick { display: flex; gap: 6px; }
.chosen { width: 50px; height: 17px; gap: 2px; background: #0696d7; color: #fff; }
.combo { display: grid; align-items: center; }
.combo > * { grid-area: 1 / 1; }
.combo svg, .combo .caret { z-index: 1; pointer-events: none; }
.combo svg { margin-left: 2px; }
.combo .caret { justify-self: end; margin-right: 3px; }
.combo select { appearance: none; width: 100%; height: 17px; padding-left: 14px; border-color: #ddd; }
.value { display: flex; align-items: center; gap: 2px; padding: 0 3px 0 4px; }
.value input { flex: 1; height: 13px; padding-left: 2px; }
.dialog hr { margin: 0 8px 0 1px; border: 0; border-top: 2px solid #c4c4c4; }
.fields.last { padding: 3px 8px 13px 7px; }
.dialog footer {
  display: flex;
  align-items: center;
  gap: 6px;
  height: 23px;
  padding: 0 6px 0 4px;
  border-top: 1px solid #ccc;
}
.dialog footer svg { margin-right: auto; }
.dialog footer button {
  width: 39px;
  height: 12px;
  border: 1px solid #bbb;
  background: #ececec;
  color: #777;
  font: 8px/10px "Liberation Sans", sans-serif;
}

/* Lower strip */
.lower { display: grid; grid-template-columns: 1fr auto 1fr; align-items: center; }
.navbar { display: flex; align-items: center; height: 16px; padding: 0 7px 0 2px; gap: 4px; background: #f0f0f0; }
.navbar .drop { gap: 1px; }
.navbar .split { margin-left: 4px; }
.status { justify-self: end; margin-right: 21px; color: #222; font-family: "Liberation Sans", sans-serif; font-weight: bold; }

/* Timeline */
.timeline {
  display: flex;
  align-items: center;
  height: 32px;
  padding: 0 8px 0 6px;
  gap: 11px;
  background: #f0f0f0;
  border-top: 2px solid #d2d2d2;
  border-bottom: 2px solid #2e2e2e;
}
.play { display: flex; gap: 6px; }
.settings { margin-left: auto; }
```
